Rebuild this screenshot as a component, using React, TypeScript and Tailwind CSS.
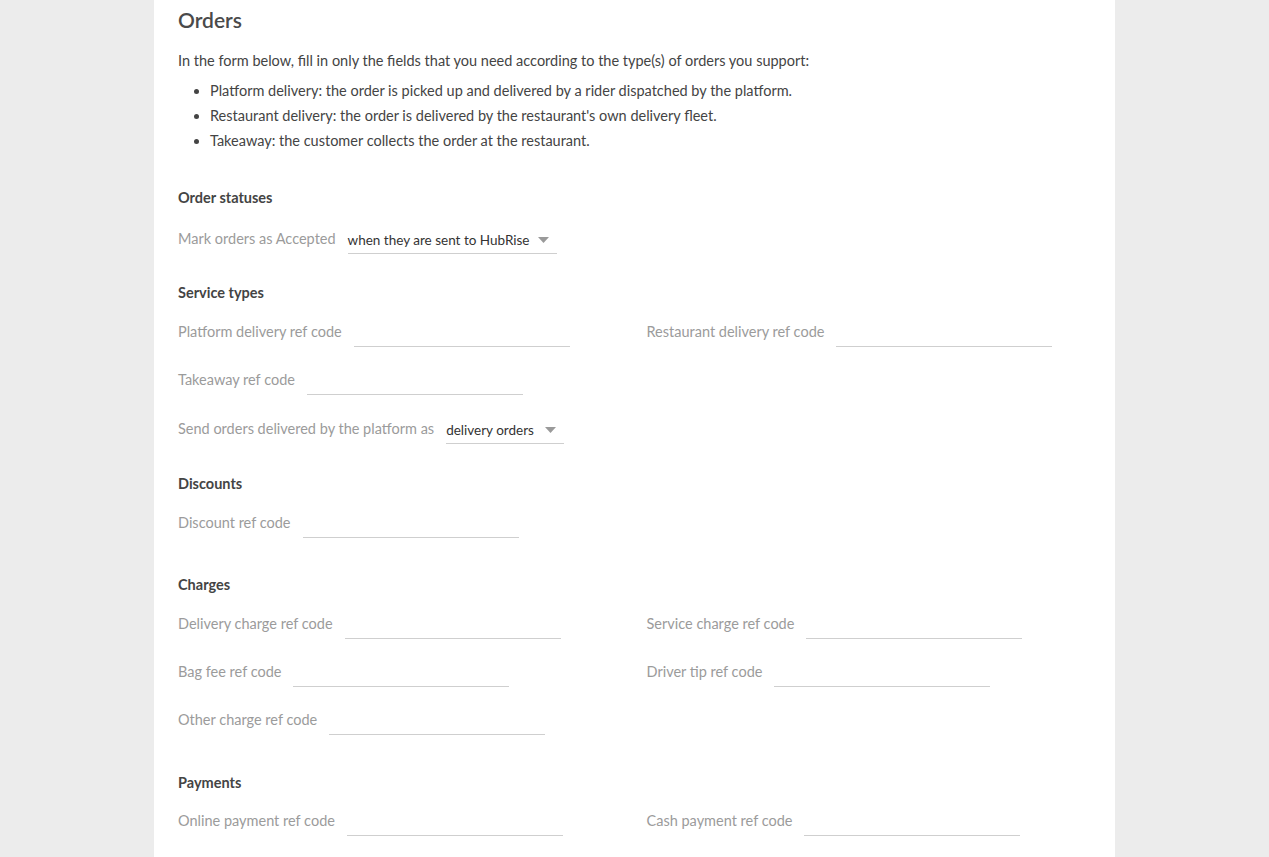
import React from "react";

const FONT = { fontFamily: "Lato, 'Open Sans', sans-serif" };

function Arrow() {
  return (
    <svg width="11" height="6" viewBox="0 0 11 6" className="shrink-0">
      <path d="M0 0 L11 0 L5.5 6 Z" fill="#9a9a9a" />
    </svg>
  );
}

function Field({ label }: { label: string }) {
  return (
    <div className="flex items-center h-[30px]">
      <span className="text-[14.5px] text-[#9b9b9b] whitespace-nowrap">{label}</span>
      <div className="ml-3 w-[216px] h-[30px] border-b border-[#cfcfcf]" />
    </div>
  );
}

function SelectField({ label, value, width }: { label: string; value: string; width: string }) {
  return (
    <div className="flex items-center h-[30px]">
      <span className="text-[14.5px] text-[#9b9b9b] whitespace-nowrap">{label}</span>
      <div className={`ml-3 h-[30px] pt-[3px] border-b border-[#cfcfcf] flex items-center justify-between pr-2 ${width}`}>
        <span className="text-[13.5px] text-[#333333] whitespace-nowrap">{value}</span>
        <Arrow />
      </div>
    </div>
  );
}

function Heading({ children }: { children: React.ReactNode }) {
  return <h2 className="text-[14.5px] font-bold leading-[20px] text-[#444444]">{children}</h2>;
}

export default function App() {
  return (
    <div className="min-h-[857px] bg-[#ececec]" style={FONT}>
      <div className="mx-auto w-[961px] min-h-[857px] bg-white px-6 pt-2 pb-10">
        <h1 className="text-[21px] leading-[24px] font-semibold text-[#4a4a4a]">Orders</h1>
        <p className="mt-4 text-[14.5px] leading-[25px] text-[#444444]">
          In the form below, fill in only the fields that you need according to the type(s) of orders you support:
        </p>
        <ul className="mt-[5px] pl-8 list-disc text-[14.5px] leading-[25px] text-[#444444]">
          <li>Platform delivery: the order is picked up and delivered by a rider dispatched by the platform.</li>
          <li>Restaurant delivery: the order is delivered by the restaurant's own delivery fleet.</li>
          <li>Takeaway: the customer collects the order at the restaurant.</li>
        </ul>

        <section className="mt-[35px]">
          <Heading>Order statuses</Heading>
          <div className="mt-4">
            <SelectField label="Mark orders as Accepted" value="when they are sent to HubRise" width="w-[209px]" />
          </div>
        </section>

        <section className="mt-[29px]">
          <Heading>Service types</Heading>
          <div className="mt-[14px] grid grid-cols-2 gap-x-6 gap-y-[18px]">
            <Field label="Platform delivery ref code" />
            <Field label="Restaurant delivery ref code" />
            <Field label="Takeaway ref code" />
          </div>
          <div className="mt-[19px]">
            <SelectField label="Send orders delivered by the platform as" value="delivery orders" width="w-[118px]" />
          </div>
        </section>

        <section className="mt-[30px]">
          <Heading>Discounts</Heading>
          <div className="mt-[14px] grid grid-cols-2 gap-x-6 gap-y-[18px]">
            <Field label="Discount ref code" />
          </div>
        </section>

        <section className="mt-[37px]">
          <Heading>Charges</Heading>
          <div className="mt-[14px] grid grid-cols-2 gap-x-6 gap-y-[18px]">
            <Field label="Delivery charge ref code" />
            <Field label="Service charge ref code" />
            <Field label="Bag fee ref code" />
            <Field label="Driver tip ref code" />
            <Field label="Other charge ref code" />
          </div>
        </section>

        <section className="mt-[38px]">
          <Heading>Payments</Heading>
          <div className="mt-[13px] grid grid-cols-2 gap-x-6 gap-y-[18px]">
            <Field label="Online payment ref code" />
            <Field label="Cash payment ref code" />
          </div>
        </section>
      </div>
    </div>
  );
}
